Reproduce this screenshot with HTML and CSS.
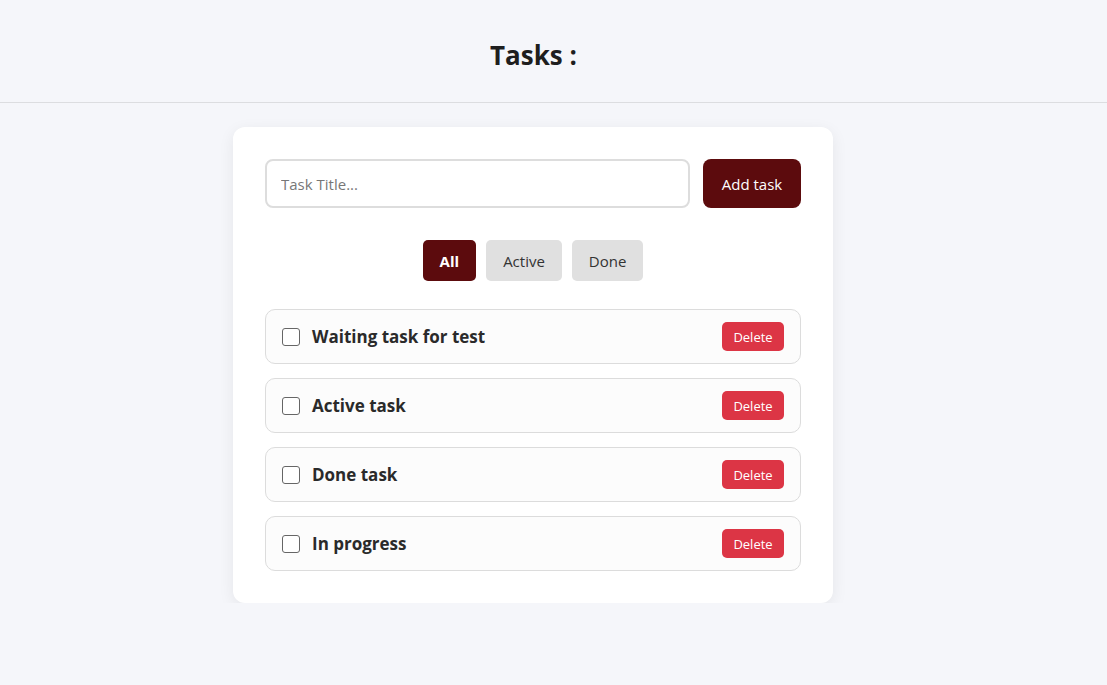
FILE: index.html
```html
<!DOCTYPE html>
<html lang="en">
<head>
<meta charset="utf-8">
<title>Tasks</title>
<link rel="stylesheet" href="styles.css">
</head>
<body>
<header class="top">
  <h1 class="title">Tasks :</h1>
</header>
<main class="wrap">
  <section class="card">
    <form class="add-row">
      <input class="task-input" type="text" placeholder="Task Title...">
      <button class="add-btn" type="button">Add task</button>
    </form>
    <div class="filters">
      <button class="filter active" type="button">All</button>
      <button class="filter" type="button">Active</button>
      <button class="filter" type="button">Done</button>
    </div>
    <ul class="list">
      <li class="item"><label class="item-left"><span class="check"></span><span class="item-title">Waiting task for test</span></label><button class="del" type="button">Delete</button></li>
      <li class="item"><label class="item-left"><span class="check"></span><span class="item-title">Active task</span></label><button class="del" type="button">Delete</button></li>
      <li class="item"><label class="item-left"><span class="check"></span><span class="item-title">Done task</span></label><button class="del" type="button">Delete</button></li>
      <li class="item"><label class="item-left"><span class="check"></span><span class="item-title">In progress</span></label><button class="del" type="button">Delete</button></li>
    </ul>
  </section>
</main>
</body>
</html>
```
FILE: styles.css
```css
* { box-sizing: border-box; }
html, body {
  margin: 0;
  padding: 0;
  background: #f5f6fa;
  font-family: "Open Sans", "Noto Sans", sans-serif;
  color: #222;
}
.top {
  height: 103px;
  border-bottom: 1px solid #dcdde0;
  display: flex;
  align-items: center;
  justify-content: center;
  padding-right: 40px;
}
.title {
  margin: 0;
  font-size: 26px;
  font-weight: 700;
  color: #1e1e1e;
  padding-top: 8px;
}
.wrap {
  display: flex;
  justify-content: center;
  padding-top: 24px;
  padding-right: 41px;
}
.card {
  width: 600px;
  background: #fff;
  border-radius: 12px;
  padding: 32px;
  box-shadow: 0 4px 16px rgba(0, 0, 0, 0.07);
}
.add-row {
  display: flex;
  gap: 13px;
  margin: 0;
}
.task-input {
  flex: 1;
  height: 49px;
  border: 2px solid #ddd;
  border-radius: 8px;
  padding: 0 14px;
  font: inherit;
  font-size: 15px;
  color: #333;
  background: #fff;
}
.task-input::placeholder { color: #777; }
.add-btn {
  width: 98px;
  height: 49px;
  border: none;
  border-radius: 8px;
  background: #5c0b0d;
  color: #fff;
  font: inherit;
  font-size: 15px;
}
.filters {
  display: flex;
  justify-content: center;
  gap: 10px;
  margin-top: 32px;
}
.filter {
  height: 41px;
  padding: 0 17px;
  border: none;
  border-radius: 5px;
  background: #e0e0e0;
  color: #333;
  font: inherit;
  font-size: 15px;
}
.filter.active {
  background: #5c0b0d;
  color: #fff;
  font-weight: 700;
}
.list {
  list-style: none;
  margin: 28px 0 0;
  padding: 0;
  display: flex;
  flex-direction: column;
  gap: 14px;
}
.item {
  height: 55px;
  display: flex;
  align-items: center;
  justify-content: space-between;
  padding: 0 16px;
  border: 1px solid #dcdcdc;
  border-radius: 10px;
  background: #fcfcfc;
}
.item-left {
  display: flex;
  align-items: center;
  gap: 12px;
}
.check {
  width: 18px;
  height: 18px;
  border: 1.5px solid #666;
  border-radius: 3px;
  background: #fff;
}
.item-title {
  font-size: 17px;
  font-weight: 700;
  color: #2a2a2a;
}
.del {
  width: 62px;
  height: 29px;
  border: none;
  border-radius: 5px;
  background: #dc3545;
  color: #fff;
  font: inherit;
  font-size: 13px;
}
```
